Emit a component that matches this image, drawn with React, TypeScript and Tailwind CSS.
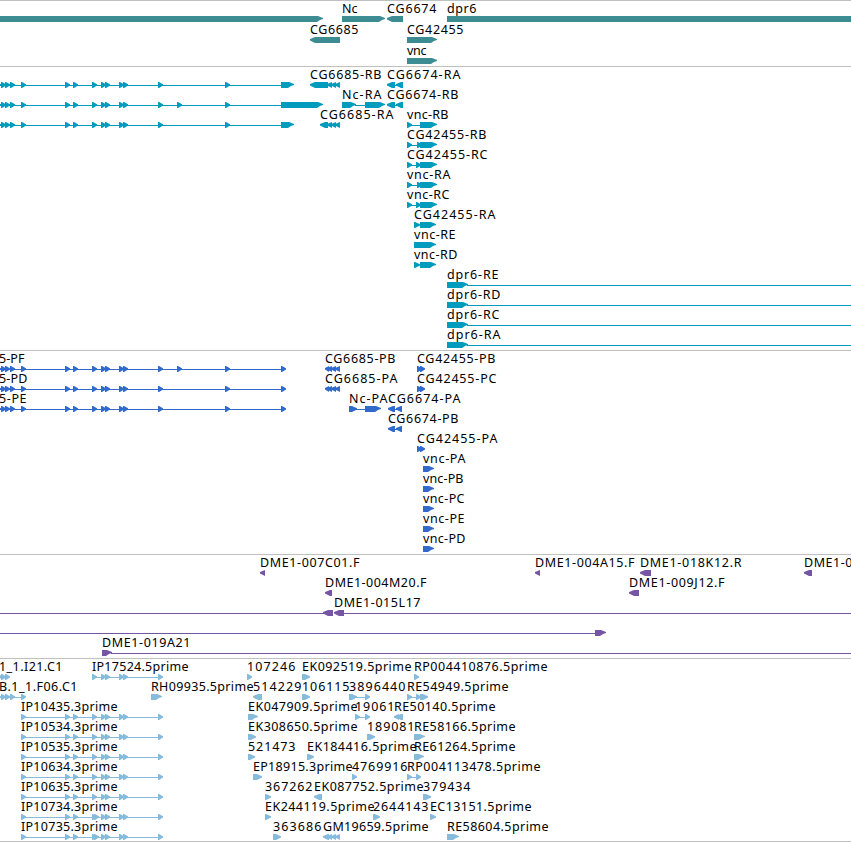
type Feature = {
  row: number;
  label?: string;
  // first and last inked column of the label
  at?: [number, number];
  right?: [number, number][];
  left?: [number, number][];
  line?: [number, number][];
};

type TrackProps = {
  name: string;
  color: string;
  height: number;
  pitch?: number;
  features: Feature[];
};

const heads = (...xs: number[]) => xs.map((x): [number, number] => [x, x + 5]);

const exons = [-4, 1, 5, 10, 21, 65, 73, 92, 101, 105, 119, 123, 158];
const estExons = heads(21, 65, 73, 92, 101, 105, 119, 123, 158);
const smallLeft: [number, number][] = [[327, 332], [331, 336], [335, 340]];

const genes: Feature[] = [
  { row: 0, right: [[-10, 323]] },
  { row: 0, label: "Nc", at: [342, 357], right: [[342, 385]] },
  { row: 0, label: "CG6674", at: [387, 436], left: [[387, 403]] },
  { row: 0, label: "dpr6", at: [447, 476], right: [[447, 870]] },
  { row: 1, label: "CG6685", at: [310, 358], left: [[310, 340]] },
  { row: 1, label: "CG42455", at: [407, 463], right: [[407, 437]] },
  { row: 2, label: "vnc", at: [407, 426], right: [[407, 437]] },
];

const transcripts: Feature[] = [
  { row: 0, right: [...heads(...exons, 225), [281, 294]], line: [[0, 281]] },
  { row: 1, right: [...heads(...exons, 177, 225), [281, 323]], line: [[0, 281]] },
  { row: 2, right: [...heads(...exons, 225), [281, 294]], line: [[0, 281]] },
  { row: 0, label: "CG6685-RB", at: [310, 381], left: [[310, 328], ...smallLeft] },
  { row: 0, label: "CG6674-RA", at: [387, 460], left: [[387, 395], [396, 403]], line: [[394, 397]] },
  { row: 1, label: "Nc-RA", at: [342, 381], right: [[342, 356], [365, 385]], line: [[355, 365]] },
  { row: 1, label: "CG6674-RB", at: [387, 458], left: [[387, 395], [396, 403]], line: [[394, 397]] },
  { row: 2, label: "CG6685-RA", at: [320, 393], left: [[320, 328], ...smallLeft] },
  { row: 2, label: "vnc-RB", at: [407, 448], right: [[407, 412], [420, 437]], line: [[411, 420]] },
  { row: 3, label: "CG42455-RB", at: [407, 486], right: [[407, 412], [417, 422], [420, 437]], line: [[411, 417]] },
  { row: 4, label: "CG42455-RC", at: [407, 487], right: [[407, 412], [416, 421], [420, 437]], line: [[411, 416]] },
  { row: 5, label: "vnc-RA", at: [407, 450], right: [[407, 412], [417, 422], [420, 437]], line: [[411, 417]] },
  { row: 6, label: "vnc-RC", at: [407, 449], right: [[407, 412], [416, 421], [420, 437]], line: [[411, 416]] },
  { row: 7, label: "CG42455-RA", at: [414, 495], right: [[414, 420], [420, 436]] },
  { row: 8, label: "vnc-RE", at: [414, 455], right: [[414, 436]] },
  { row: 9, label: "vnc-RD", at: [414, 457], right: [[414, 420], [420, 436]] },
  { row: 10, label: "dpr6-RE", at: [447, 498], right: [[447, 468]], line: [[467, 851]] },
  { row: 11, label: "dpr6-RD", at: [447, 500], right: [[447, 468]], line: [[467, 851]] },
  { row: 12, label: "dpr6-RC", at: [447, 499], right: [[447, 468]], line: [[467, 851]] },
  { row: 13, label: "dpr6-RA", at: [447, 500], right: [[447, 468]], line: [[467, 851]] },
];

const proteins: Feature[] = [
  { row: 0, label: "5-PF", at: [-1, 24], right: heads(...exons, 177, 225, 281), line: [[0, 281]] },
  { row: 1, label: "5-PD", at: [-1, 27], right: heads(...exons, 225, 281), line: [[0, 281]] },
  { row: 2, label: "5-PE", at: [-1, 26], right: heads(...exons, 225, 281), line: [[0, 281]] },
  { row: 0, label: "CG6685-PB", at: [325, 395], left: [[325, 329], ...smallLeft] },
  { row: 1, label: "CG6685-PA", at: [325, 397], left: [[325, 329], ...smallLeft] },
  { row: 2, label: "Nc-PA", at: [349, 387], right: [[349, 357], [365, 381]], line: [[356, 365]] },
  { row: 2, label: "CG6674-PA", at: [388, 460], left: [[388, 395], [396, 402]], line: [[394, 397]] },
  { row: 3, label: "CG6674-PB", at: [388, 458], left: [[388, 395], [396, 402]], line: [[394, 397]] },
  { row: 0, label: "CG42455-PB", at: [417, 495], right: heads(417, 420) },
  { row: 1, label: "CG42455-PC", at: [417, 496], right: heads(417, 420) },
  { row: 4, label: "CG42455-PA", at: [417, 497], right: heads(417, 420) },
  { row: 5, label: "vnc-PA", at: [423, 465], right: [[423, 434]] },
  { row: 6, label: "vnc-PB", at: [423, 463], right: [[423, 434]] },
  { row: 7, label: "vnc-PC", at: [423, 464], right: [[423, 434]] },
  { row: 8, label: "vnc-PE", at: [423, 464], right: [[423, 434]] },
  { row: 9, label: "vnc-PD", at: [423, 465], right: [[423, 434]] },
];

const clones: Feature[] = [
  { row: 0, label: "DME1-007C01.F", at: [260, 359], left: [[260, 265]] },
  { row: 0, label: "DME1-004A15.F", at: [535, 634], left: [[535, 540]] },
  { row: 0, label: "DME1-018K12.R", at: [640, 741], left: [[640, 651]] },
  { row: 0, label: "DME1-0", at: [804, 852], left: [[804, 812]] },
  { row: 1, label: "DME1-004M20.F", at: [325, 426], left: [[325, 332]] },
  { row: 1, label: "DME1-009J12.F", at: [629, 724], left: [[629, 639]] },
  { row: 2, left: [[323, 333]], line: [[0, 324]] },
  { row: 2, label: "DME1-015L17", at: [334, 420], left: [[334, 344]], line: [[344, 851]] },
  { row: 3, right: [[595, 606]], line: [[0, 595]] },
  { row: 4, label: "DME1-019A21", at: [102, 190], right: [[102, 112]], line: [[111, 851]] },
];

const ests: Feature[] = [
  { row: 0, label: "1_1.I21.C1", at: [-1, 62], right: heads(-3, 1, 5), line: [[0, 5]] },
  { row: 0, label: "IP17524.5prime", at: [92, 188], right: heads(92, 101, 105, 119, 123, 158), line: [[92, 158]] },
  { row: 1, label: "B.1_1.F06.C1", at: [-1, 77], right: heads(-4, 1, 5, 10, 21), line: [[0, 21]] },
  { row: 1, label: "RH09935.5prime", at: [151, 253], right: [[151, 162]] },
  { row: 2, label: "IP10435.3prime", at: [21, 117], right: estExons, line: [[21, 158]] },
  { row: 3, label: "IP10534.3prime", at: [21, 117], right: estExons, line: [[21, 158]] },
  { row: 4, label: "IP10535.3prime", at: [21, 117], right: estExons, line: [[21, 158]] },
  { row: 5, label: "IP10634.3prime", at: [21, 117], right: estExons, line: [[21, 158]] },
  { row: 6, label: "IP10635.3prime", at: [21, 117], right: estExons, line: [[21, 158]] },
  { row: 7, label: "IP10734.3prime", at: [21, 117], right: [...estExons, [94, 99]], line: [[21, 158]] },
  { row: 8, label: "IP10735.3prime", at: [21, 117], right: [...estExons, [94, 99]], line: [[21, 158]] },
  { row: 0, label: "107246", at: [247, 295], right: [[247, 252]] },
  { row: 0, label: "EK092519.5prime", at: [302, 411], right: [[302, 310]] },
  { row: 0, label: "RP004410876.5prime", at: [414, 547], right: [[414, 419]] },
  { row: 1, label: "514229", at: [253, 301], left: [[253, 262]] },
  { row: 1, label: "106115", at: [302, 349], right: [[302, 310]] },
  { row: 1, label: "3896440", at: [349, 405], right: [[349, 357], [365, 370]], line: [[356, 365]] },
  { row: 1, label: "RE54949.5prime", at: [407, 508], right: [[407, 412], [416, 421], [420, 428]], line: [[411, 416]] },
  { row: 2, label: "EK047909.5prime", at: [248, 357], right: [[248, 258]] },
  { row: 2, label: "19061", at: [355, 394], right: [[355, 360], [365, 370]], line: [[359, 365]] },
  { row: 2, label: "RE50140.5prime", at: [394, 495], left: [[394, 399], [396, 403]] },
  { row: 3, label: "EK308650.5prime", at: [248, 357], right: [[248, 256]] },
  { row: 3, label: "189081", at: [367, 414], right: [[367, 375]] },
  { row: 3, label: "RE58166.5prime", at: [414, 515], right: [[414, 425]] },
  { row: 4, label: "521473", at: [248, 295], right: [[248, 255]] },
  { row: 4, label: "EK184416.5prime", at: [307, 416], right: [[307, 314]] },
  { row: 4, label: "RE61264.5prime", at: [414, 515], right: [[414, 424]] },
  { row: 5, label: "EP18915.3prime", at: [253, 352], right: [[253, 262]] },
  { row: 5, label: "4769916", at: [352, 407], right: [[352, 357]] },
  { row: 5, label: "RP004113478.5prime", at: [407, 540], right: [[407, 412], [416, 421]], line: [[411, 416]] },
  { row: 6, label: "367262", at: [265, 312], right: [[265, 271]] },
  { row: 6, label: "EK087752.5prime", at: [314, 423], left: [[314, 322]] },
  { row: 6, label: "379434", at: [423, 470], right: [[423, 431]] },
  { row: 7, label: "EK244119.5prime", at: [265, 374], right: [[265, 271]] },
  { row: 7, label: "2644143", at: [373, 428], right: [[373, 380]] },
  { row: 7, label: "EC13151.5prime", at: [430, 531], right: [[430, 436]] },
  { row: 8, label: "363686", at: [273, 321], right: [[273, 281]] },
  { row: 8, label: "GM19659.5prime", at: [323, 428], left: [[323, 329], ...smallLeft] },
  { row: 8, label: "RE58604.5prime", at: [447, 548], right: [[447, 459]] },
];

// tips sit a little above the middle, with a slight shoulder on the long ones
function rightArrow([a, b]: [number, number], y: number) {
  if (b - a < 10) {
    return `M${a} ${y}L${Math.max(a + 1, b - 5)} ${y}L${b} ${y + 2.2}V${y + 3.6}L${Math.max(a + 1, b - 5)} ${y + 6}H${a}Z`;
  }
  return `M${a} ${y}H${b - 5}L${b} ${y + 2}V${y + 3}L${b - 3} ${y + 4}L${b - 6} ${y + 6}H${a}Z`;
}

function leftArrow([a, b]: [number, number], y: number) {
  const neck = Math.min(a + 5, b);
  return `M${b} ${y}H${neck}L${a} ${y + 2}V${y + 3.6}L${neck} ${y + 6}H${b}Z`;
}

function Track({ name, color, height, pitch = 20, features }: TrackProps) {
  return (
    <section aria-label={name} className="border-t border-[#c0c0c0]">
      <svg width={851} height={height - 1} className="block overflow-hidden">
        {features.map((f, i) => {
          const y = f.row * pitch + 15;
          return (
            <g key={i} fill={color}>
              {f.line?.map(([a, b]) => (
                <rect key={a} x={a} y={y + 3} width={b - a} height={1} />
              ))}
              {f.right?.map((s, j) => <path key={j} d={rightArrow(s, y)} />)}
              {f.left?.map((s, j) => <path key={j} d={leftArrow(s, y)} />)}
              {f.label && f.at && (
                <text
                  x={f.at[0]}
                  y={y - 3}
                  textLength={f.at[1] - f.at[0] + 0.5}
                  className="fill-black text-[12.5px]"
                >
                  {f.label}
                </text>
              )}
            </g>
          );
        })}
      </svg>
    </section>
  );
}

export default function App() {
  return (
    <main className="flex h-[842px] w-[851px] flex-col overflow-hidden border-b border-[#c0c0c0] bg-white font-['Noto_Sans',sans-serif]">
      <Track name="Genes" color="#3e8c93" height={66} pitch={21} features={genes} />
      <Track name="Transcripts" color="#009bbd" height={284} features={transcripts} />
      <Track name="Proteins" color="#316acb" height={204} features={proteins} />
      <Track name="Clones" color="#7655a5" height={104} features={clones} />
      <Track name="ESTs" color="#87bbdc" height={183} features={ests} />
    </main>
  );
}
